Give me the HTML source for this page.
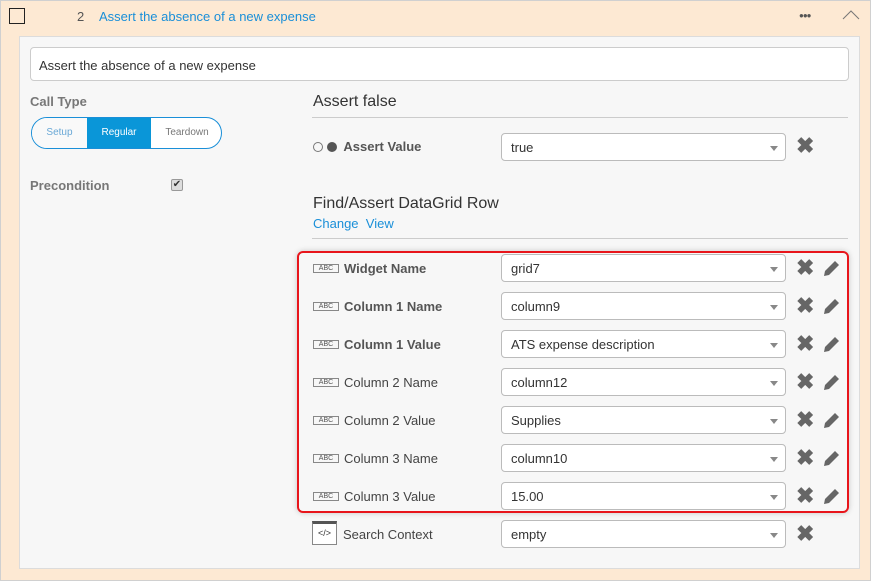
<!DOCTYPE html>
<html><head><style>
*{box-sizing:border-box;margin:0;padding:0}
body{width:871px;height:581px;background:#fde9d3;font-family:"Liberation Sans",sans-serif;position:relative;overflow:hidden;box-shadow:inset 0 0 0 1px #d0d0d0}
.a{position:absolute}
.panel{left:19px;top:36px;width:841px;height:533px;background:#f7f7f7;border:1px solid #dcdcdc}
.lbl{font-size:13px;color:#444;white-space:nowrap}
.b{font-weight:bold;color:#555}
.sel{width:285px;height:28px;background:#fff;border:1px solid #bbb;border-radius:4px;font-size:13px;color:#333;padding:6px 9px}
.sel:after{content:"";position:absolute;right:7px;top:12px;border-left:4px solid transparent;border-right:4px solid transparent;border-top:5px solid #888}
.abc{display:inline-block;width:26px;height:9px;border:1px solid #888;font-size:7px;line-height:7px;text-align:center;color:#555;font-weight:normal;vertical-align:middle;margin-right:5px;position:relative;top:-1px}
.x{font-size:22px;color:#666;font-weight:bold;line-height:20px}
</style></head><body>
<div class="a" style="left:9px;top:8px;width:16px;height:16px;border:1px solid #222"></div>
<div class="a" style="left:77px;top:9px;font-size:13px;color:#555">2</div>
<div class="a" style="left:99px;top:9px;font-size:13px;color:#1a8fd8">Assert the absence of a new expense</div>
<div class="a" style="left:799px;top:11px;font-size:8px;color:#555;letter-spacing:-1px">●●●</div>
<svg class="a" style="left:842px;top:10px" width="18" height="10"><path d="M1 9L9 1L17 9" stroke="#777" fill="none"/></svg>
<div class="a panel"></div>
<div class="a" style="left:30px;top:47px;width:819px;height:34px;background:#fff;border:1px solid #ccc;border-radius:4px;font-size:13px;color:#333;padding:10px 8px">Assert the absence of a new expense</div>
<div class="a lbl b" style="left:30px;top:94px;color:#777">Call Type</div>
<div class="a" style="left:31px;top:117px;width:191px;height:32px;border-radius:16px;border:1px solid #1a8fd8;background:#fff;overflow:hidden;font-size:10px">
<div class="a" style="left:0;top:0;width:55px;height:30px;background:#f9f9f9;color:#69a8d6;text-align:center;line-height:30px">Setup</div>
<div class="a" style="left:55px;top:0;width:64px;height:30px;background:#0a96d8;color:#fff;text-align:center;line-height:30px">Regular</div>
<div class="a" style="left:119px;top:0;width:72px;height:30px;color:#777;text-align:center;line-height:30px">Teardown</div></div>
<div class="a lbl b" style="left:30px;top:178px;color:#777">Precondition</div>
<div class="a" style="left:171px;top:179px;width:12px;height:12px;border:1px solid #999;border-radius:2px;background:#ddd;font-size:10px;line-height:10px;text-align:center;color:#333">✔</div>
<div class="a" style="left:313px;top:93px;font-size:16px;color:#333">Assert false</div>
<div class="a" style="left:312px;top:117px;width:536px;border-top:1px solid #ccc"></div>
<div class="a lbl b" style="left:313px;top:139px"><span style="display:inline-block;width:10px;height:10px;border:1px solid #777;border-radius:50%;vertical-align:-1px"></span> <span style="display:inline-block;width:10px;height:10px;background:#555;border-radius:50%;vertical-align:-1px"></span>&nbsp; Assert Value</div>
<div class="a sel" style="left:501px;top:133px">true</div>
<div class="a x" style="left:796px;top:136px">✖</div>
<div class="a" style="left:313px;top:195px;font-size:16px;color:#333">Find/Assert DataGrid Row</div>
<div class="a" style="left:313px;top:216px;font-size:13px;color:#1a8fd8">Change &nbsp;View</div>
<div class="a" style="left:312px;top:238px;width:536px;border-top:1px solid #ccc"></div>
<div class="a" style="left:297px;top:251px;width:552px;height:262px;border:2px solid #e8151b;border-radius:6px;box-shadow:0 0 6px rgba(0,0,0,.2)"></div>

<div class="a lbl b" style="left:313px;top:261px"><span class="abc">ABC</span>Widget Name</div>
<div class="a sel" style="left:501px;top:254px">grid7</div>
<div class="a lbl b" style="left:313px;top:299px"><span class="abc">ABC</span>Column 1 Name</div>
<div class="a sel" style="left:501px;top:292px">column9</div>
<div class="a lbl b" style="left:313px;top:337px"><span class="abc">ABC</span>Column 1 Value</div>
<div class="a sel" style="left:501px;top:330px">ATS expense description</div>
<div class="a lbl" style="left:313px;top:375px"><span class="abc">ABC</span>Column 2 Name</div>
<div class="a sel" style="left:501px;top:368px">column12</div>
<div class="a lbl" style="left:313px;top:413px"><span class="abc">ABC</span>Column 2 Value</div>
<div class="a sel" style="left:501px;top:406px">Supplies</div>
<div class="a lbl" style="left:313px;top:451px"><span class="abc">ABC</span>Column 3 Name</div>
<div class="a sel" style="left:501px;top:444px">column10</div>
<div class="a lbl" style="left:313px;top:489px"><span class="abc">ABC</span>Column 3 Value</div>
<div class="a sel" style="left:501px;top:482px">15.00</div>
<div class="a" style="left:312px;top:521px;width:25px;height:24px;border:1px solid #888;border-top:3px solid #555;font-size:9px;text-align:center;line-height:19px;color:#333;background:#fff">&lt;/&gt;</div>
<div class="a lbl" style="left:343px;top:527px">Search Context</div>
<div class="a sel" style="left:501px;top:520px">empty</div>
<div class="a x" style="left:796px;top:524px">✖</div>

<div class="a x" style="left:796px;top:258px">✖</div>
<div class="a x" style="left:796px;top:296px">✖</div>
<div class="a x" style="left:796px;top:334px">✖</div>
<div class="a x" style="left:796px;top:372px">✖</div>
<div class="a x" style="left:796px;top:410px">✖</div>
<div class="a x" style="left:796px;top:448px">✖</div>
<div class="a x" style="left:796px;top:486px">✖</div>
<svg class="a" style="left:822px;top:259px" width="18" height="250">
<g fill="#666"><path id="p" d="M2 17L3 12L13 2L17 6L7 16Z"/>
<use href="#p" y="38"/><use href="#p" y="76"/><use href="#p" y="114"/><use href="#p" y="152"/><use href="#p" y="190"/><use href="#p" y="228"/></g></svg>
</body></html>
